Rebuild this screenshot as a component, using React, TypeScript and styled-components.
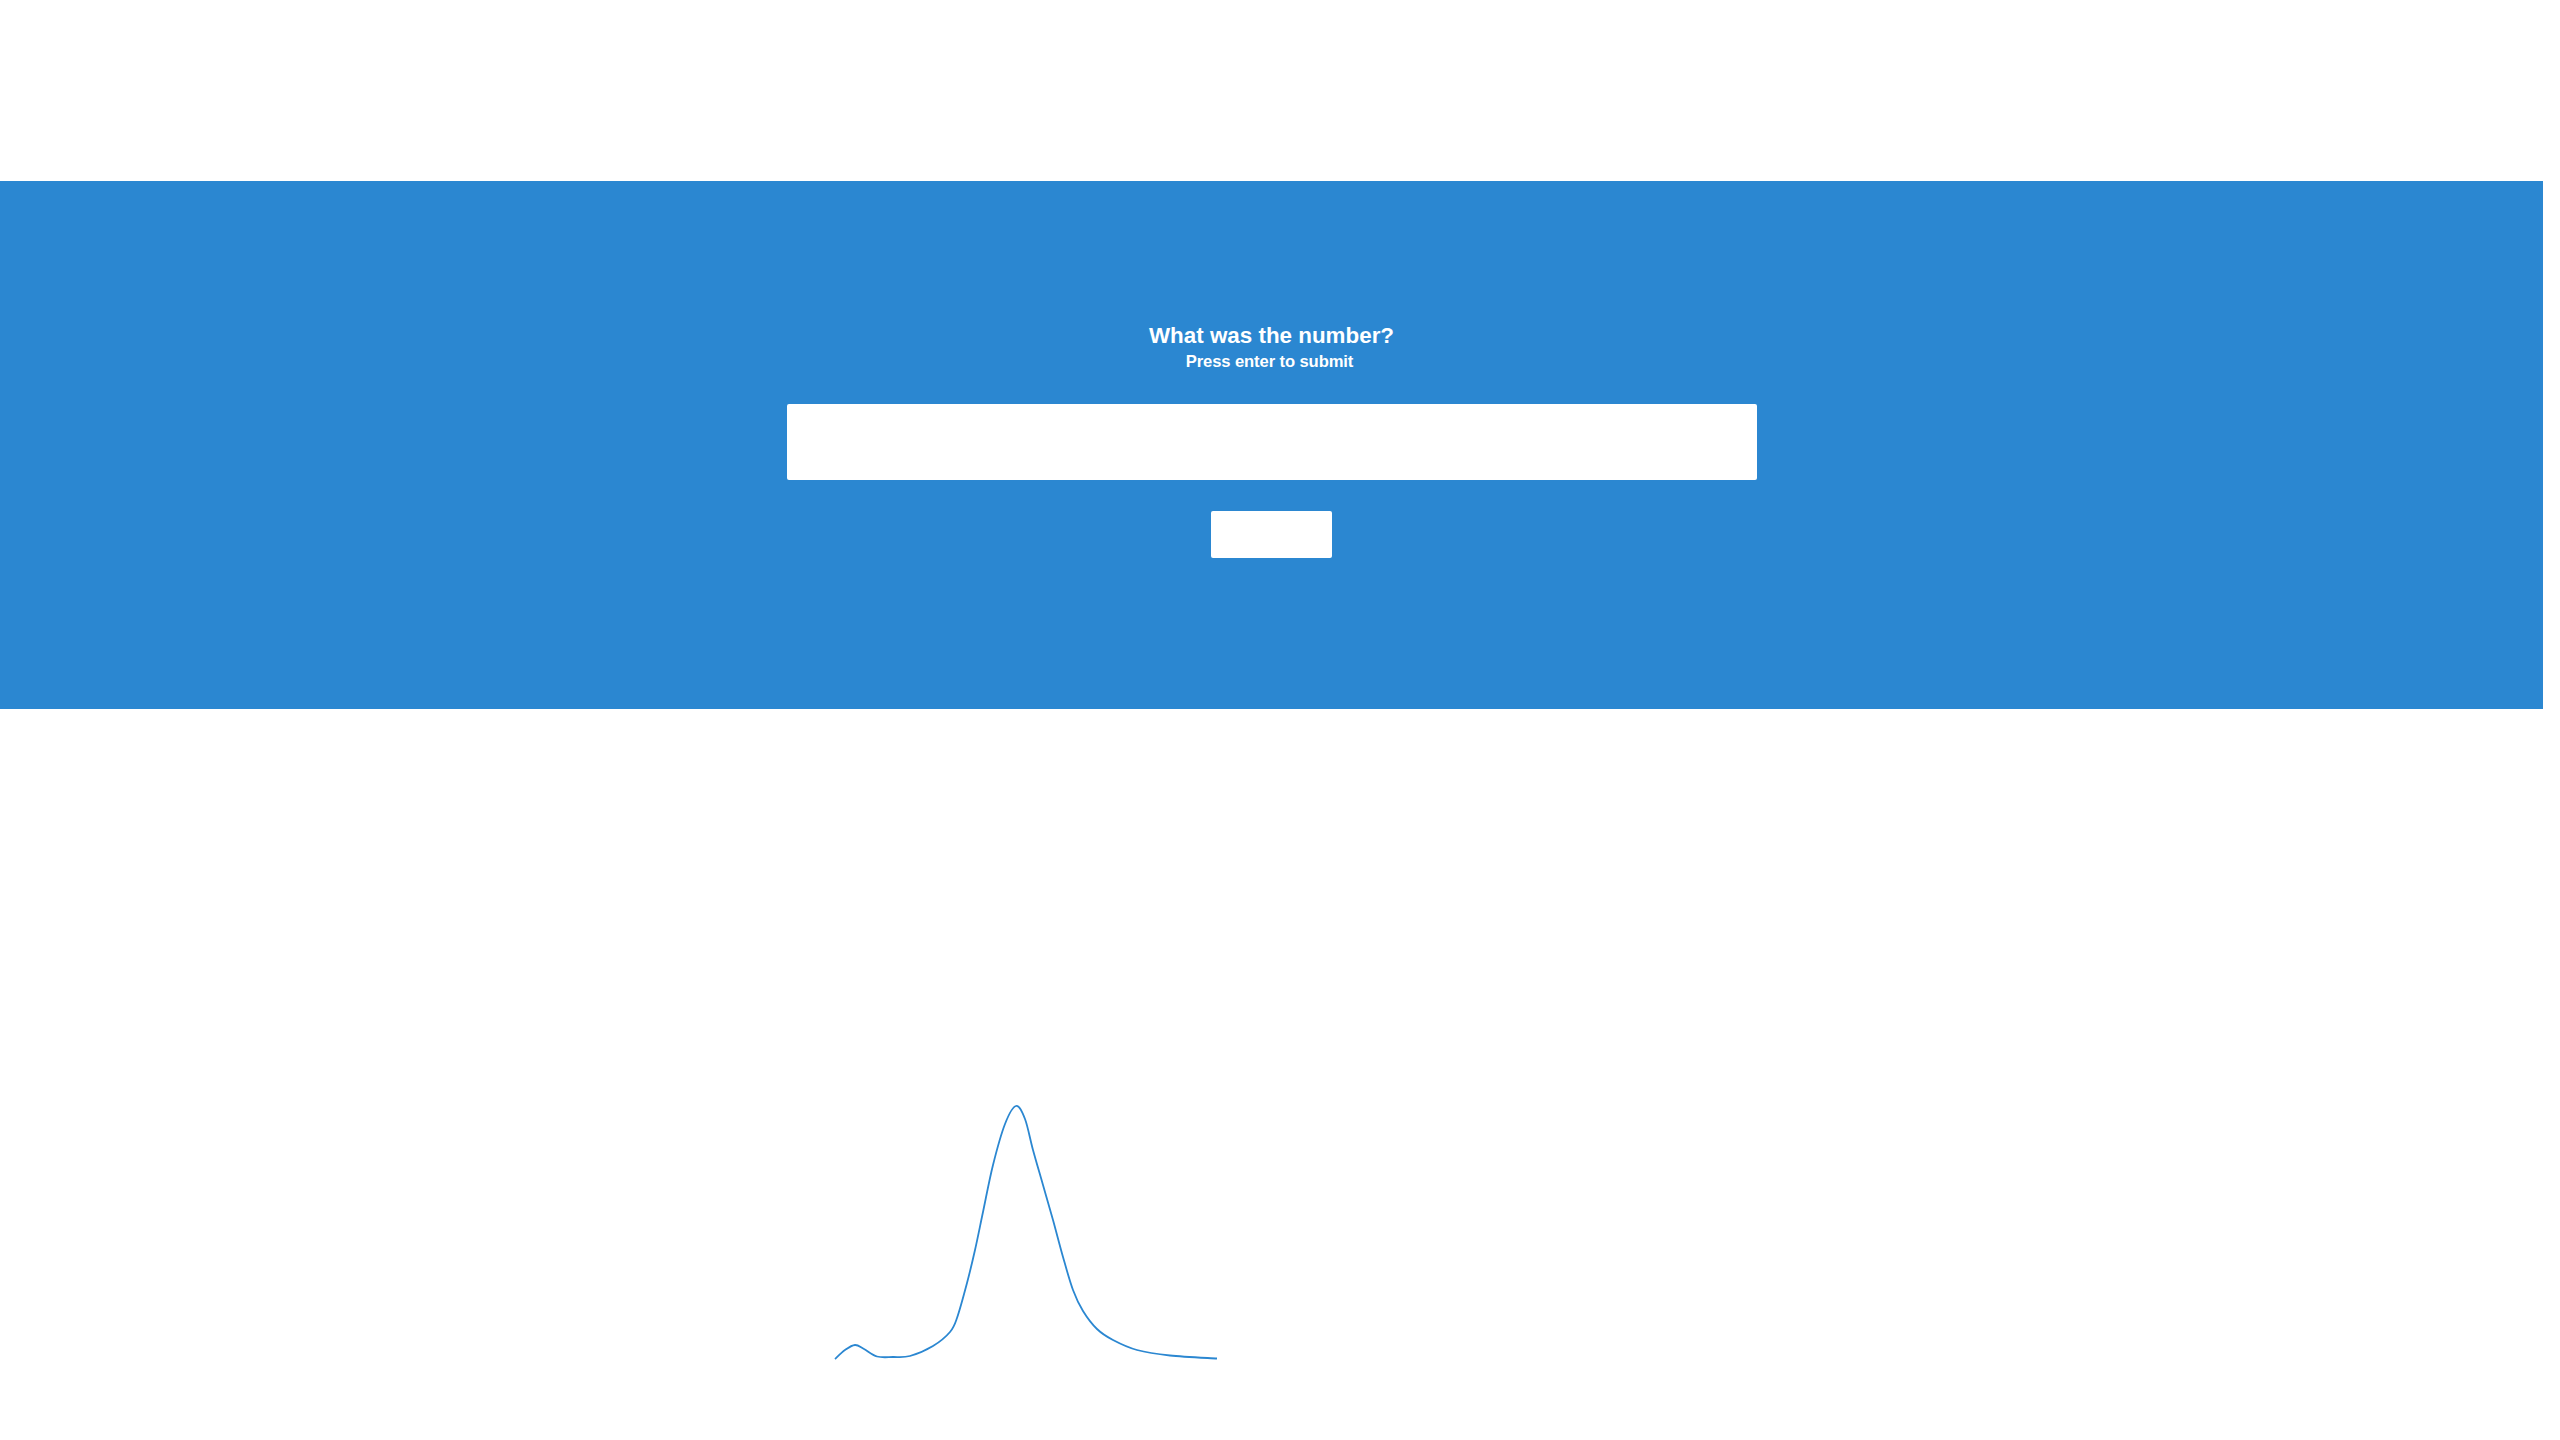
import React from "react";
import styled, { createGlobalStyle } from "styled-components";

const GlobalStyle = createGlobalStyle`
  html, body {
    margin: 0;
    padding: 0;
    background: #ffffff;
  }
  body {
    font-family: "Liberation Sans", Arial, sans-serif;
  }
`;

const Page = styled.div`
  width: 2543px;
  min-height: 1440px;
  display: flex;
  flex-direction: column;
`;

const TopSpace = styled.div`
  height: 181px;
`;

const Band = styled.section`
  background: #2b87d1;
  height: 528px;
  box-sizing: border-box;
  padding-top: 142px;
  display: flex;
  flex-direction: column;
  align-items: center;
  color: #ffffff;
`;

const Title = styled.h2`
  margin: 0;
  font-size: 22.4px;
  font-weight: 700;
  line-height: 25.7px;
`;

const Subtitle = styled.p`
  margin: 3px 4px 0 0;
  font-size: 16.6px;
  font-weight: 700;
  line-height: 19px;
  letter-spacing: -0.1px;
`;

const NumberInput = styled.input`
  margin-top: 33px;
  width: 970px;
  height: 76px;
  box-sizing: border-box;
  border: none;
  border-radius: 2px;
  background: #ffffff;
  outline: none;
  font-size: 24px;
  padding: 0 16px;
  font-family: "Liberation Sans", Arial, sans-serif;
`;

const SubmitButton = styled.button`
  margin-top: 31px;
  width: 121px;
  height: 47px;
  border: none;
  border-radius: 2px;
  background: #ffffff;
  cursor: pointer;
`;

const ChartArea = styled.div`
  padding-top: 381px;
  padding-left: 825px;
`;

const ChartSvg = styled.svg`
  display: block;
`;

const pts: [number, number][] = [
  [835, 1359],
  [845, 1350],
  [855, 1345],
  [864, 1349],
  [877, 1356.5],
  [893, 1357],
  [910, 1356],
  [933, 1346],
  [950, 1332],
  [957, 1318],
  [967, 1283],
  [975, 1250],
  [983, 1212],
  [993, 1165],
  [1005, 1124],
  [1016, 1106],
  [1025, 1119],
  [1033, 1150],
  [1043, 1185],
  [1053, 1220],
  [1063, 1257],
  [1073, 1290],
  [1083, 1311],
  [1097, 1329],
  [1113, 1340],
  [1137, 1350],
  [1170, 1355.5],
  [1217, 1358.5],
];

function buildPath(points: [number, number][], ox: number, oy: number): string {
  const p = points.map(([x, y]) => [x - ox, y - oy] as [number, number]);
  let d = `M${p[0][0]},${p[0][1]}`;
  for (let i = 0; i < p.length - 1; i++) {
    const p0 = p[i - 1] || p[i];
    const p1 = p[i];
    const p2 = p[i + 1];
    const p3 = p[i + 2] || p2;
    const c1x = p1[0] + (p2[0] - p0[0]) / 6;
    const c1y = p1[1] + (p2[1] - p0[1]) / 6;
    const c2x = p2[0] - (p3[0] - p1[0]) / 6;
    const c2y = p2[1] - (p3[1] - p1[1]) / 6;
    d += ` C${c1x.toFixed(2)},${c1y.toFixed(2)} ${c2x.toFixed(2)},${c2y.toFixed(2)} ${p2[0]},${p2[1]}`;
  }
  return d;
}

export default function App() {
  const d = buildPath(pts, 825, 1090);
  return (
    <>
      <GlobalStyle />
      <Page>
        <TopSpace />
        <Band>
          <Title>What was the number?</Title>
          <Subtitle>Press enter to submit</Subtitle>
          <NumberInput type="text" aria-label="number" />
          <SubmitButton type="button" aria-label="submit" />
        </Band>
        <ChartArea>
          <ChartSvg width={400} height={280} viewBox="0 0 400 280">
            <path d={d} fill="none" stroke="#2b87d1" strokeWidth={1.8} />
          </ChartSvg>
        </ChartArea>
      </Page>
    </>
  );
}
